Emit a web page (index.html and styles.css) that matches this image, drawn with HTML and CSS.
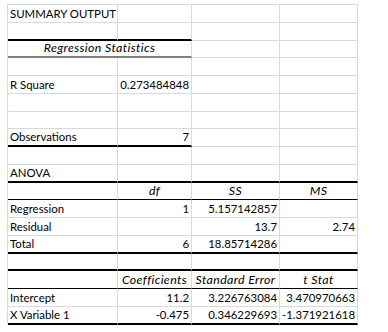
FILE: index.html
```html
<!DOCTYPE html>
<html>
<head>
<meta charset="utf-8">
<link rel="stylesheet" href="styles.css">
</head>
<body>
<div class="sheet">
  <div class="c">SUMMARY OUTPUT</div><div class="c"></div><div class="c"></div><div class="c"></div>
  <div class="c bb"></div><div class="c bb"></div><div class="c"></div><div class="c"></div>
  <div class="c span2 hd bg">Regression Statistics</div><div class="c"></div><div class="c"></div>
  <div class="c"></div><div class="c"></div><div class="c"></div><div class="c"></div>
  <div class="c">R Square</div><div class="c num">0.273484848</div><div class="c"></div><div class="c"></div>
  <div class="c"></div><div class="c"></div><div class="c"></div><div class="c"></div>
  <div class="c"></div><div class="c"></div><div class="c"></div><div class="c"></div>
  <div class="c bb">Observations</div><div class="c num bb">7</div><div class="c"></div><div class="c"></div>
  <div class="c"></div><div class="c"></div><div class="c"></div><div class="c"></div>
  <div class="c bb">ANOVA</div><div class="c bb"></div><div class="c bb"></div><div class="c bb"></div>
  <div class="c bt"></div><div class="c hd bt">df</div><div class="c hd bt">SS</div><div class="c hd bt">MS</div>
  <div class="c">Regression</div><div class="c num">1</div><div class="c num">5.157142857</div><div class="c"></div>
  <div class="c">Residual</div><div class="c"></div><div class="c num">13.7</div><div class="c num">2.74</div>
  <div class="c bb">Total</div><div class="c num bb">6</div><div class="c num bb">18.85714286</div><div class="c bb"></div>
  <div class="c bb"></div><div class="c bb"></div><div class="c bb"></div><div class="c bb"></div>
  <div class="c bt"></div><div class="c hd bt">Coefficients</div><div class="c hd bt">Standard Error</div><div class="c hd bt">t Stat</div>
  <div class="c">Intercept</div><div class="c num">11.2</div><div class="c num">3.226763084</div><div class="c num">3.470970663</div>
  <div class="c bb">X Variable 1</div><div class="c num bb">-0.475</div><div class="c num bb">0.346229693</div><div class="c num bb">-1.371921618</div>
</div>
</body>
</html>
```
FILE: styles.css
```css
html, body {
  margin: 0;
  padding: 0;
  background: #ffffff;
}
body {
  padding: 4px 0 0 7px;
}
.sheet {
  display: grid;
  grid-template-columns: 110px 74px 88px 78px;
  grid-auto-rows: 17.78px;
  width: max-content;
  border-top: 1px solid #d5dae5;
  border-left: 1px solid #d5dae5;
  font-family: Lato, "Liberation Sans", sans-serif;
  font-size: 11.4px;
  color: #000000;
}
.c {
  box-sizing: border-box;
  border-right: 1px solid #d5dae5;
  border-bottom: 1px solid #d5dae5;
  padding: 0 2px 2px 2px;
  display: flex;
  align-items: flex-end;
  white-space: nowrap;
  overflow: visible;
  line-height: 13px;
}
.num {
  justify-content: flex-end;
}
.hd {
  justify-content: center;
  font-style: italic;
  font-size: 12.4px;
  letter-spacing: 0.35px;
}
.span2 {
  grid-column: span 2;
}
.bb {
  border-bottom: 2px solid #000000;
}
.bg {
  border-bottom: 2px solid #808080;
}
.bt {
  border-bottom: 1px solid #000000;
}
```
